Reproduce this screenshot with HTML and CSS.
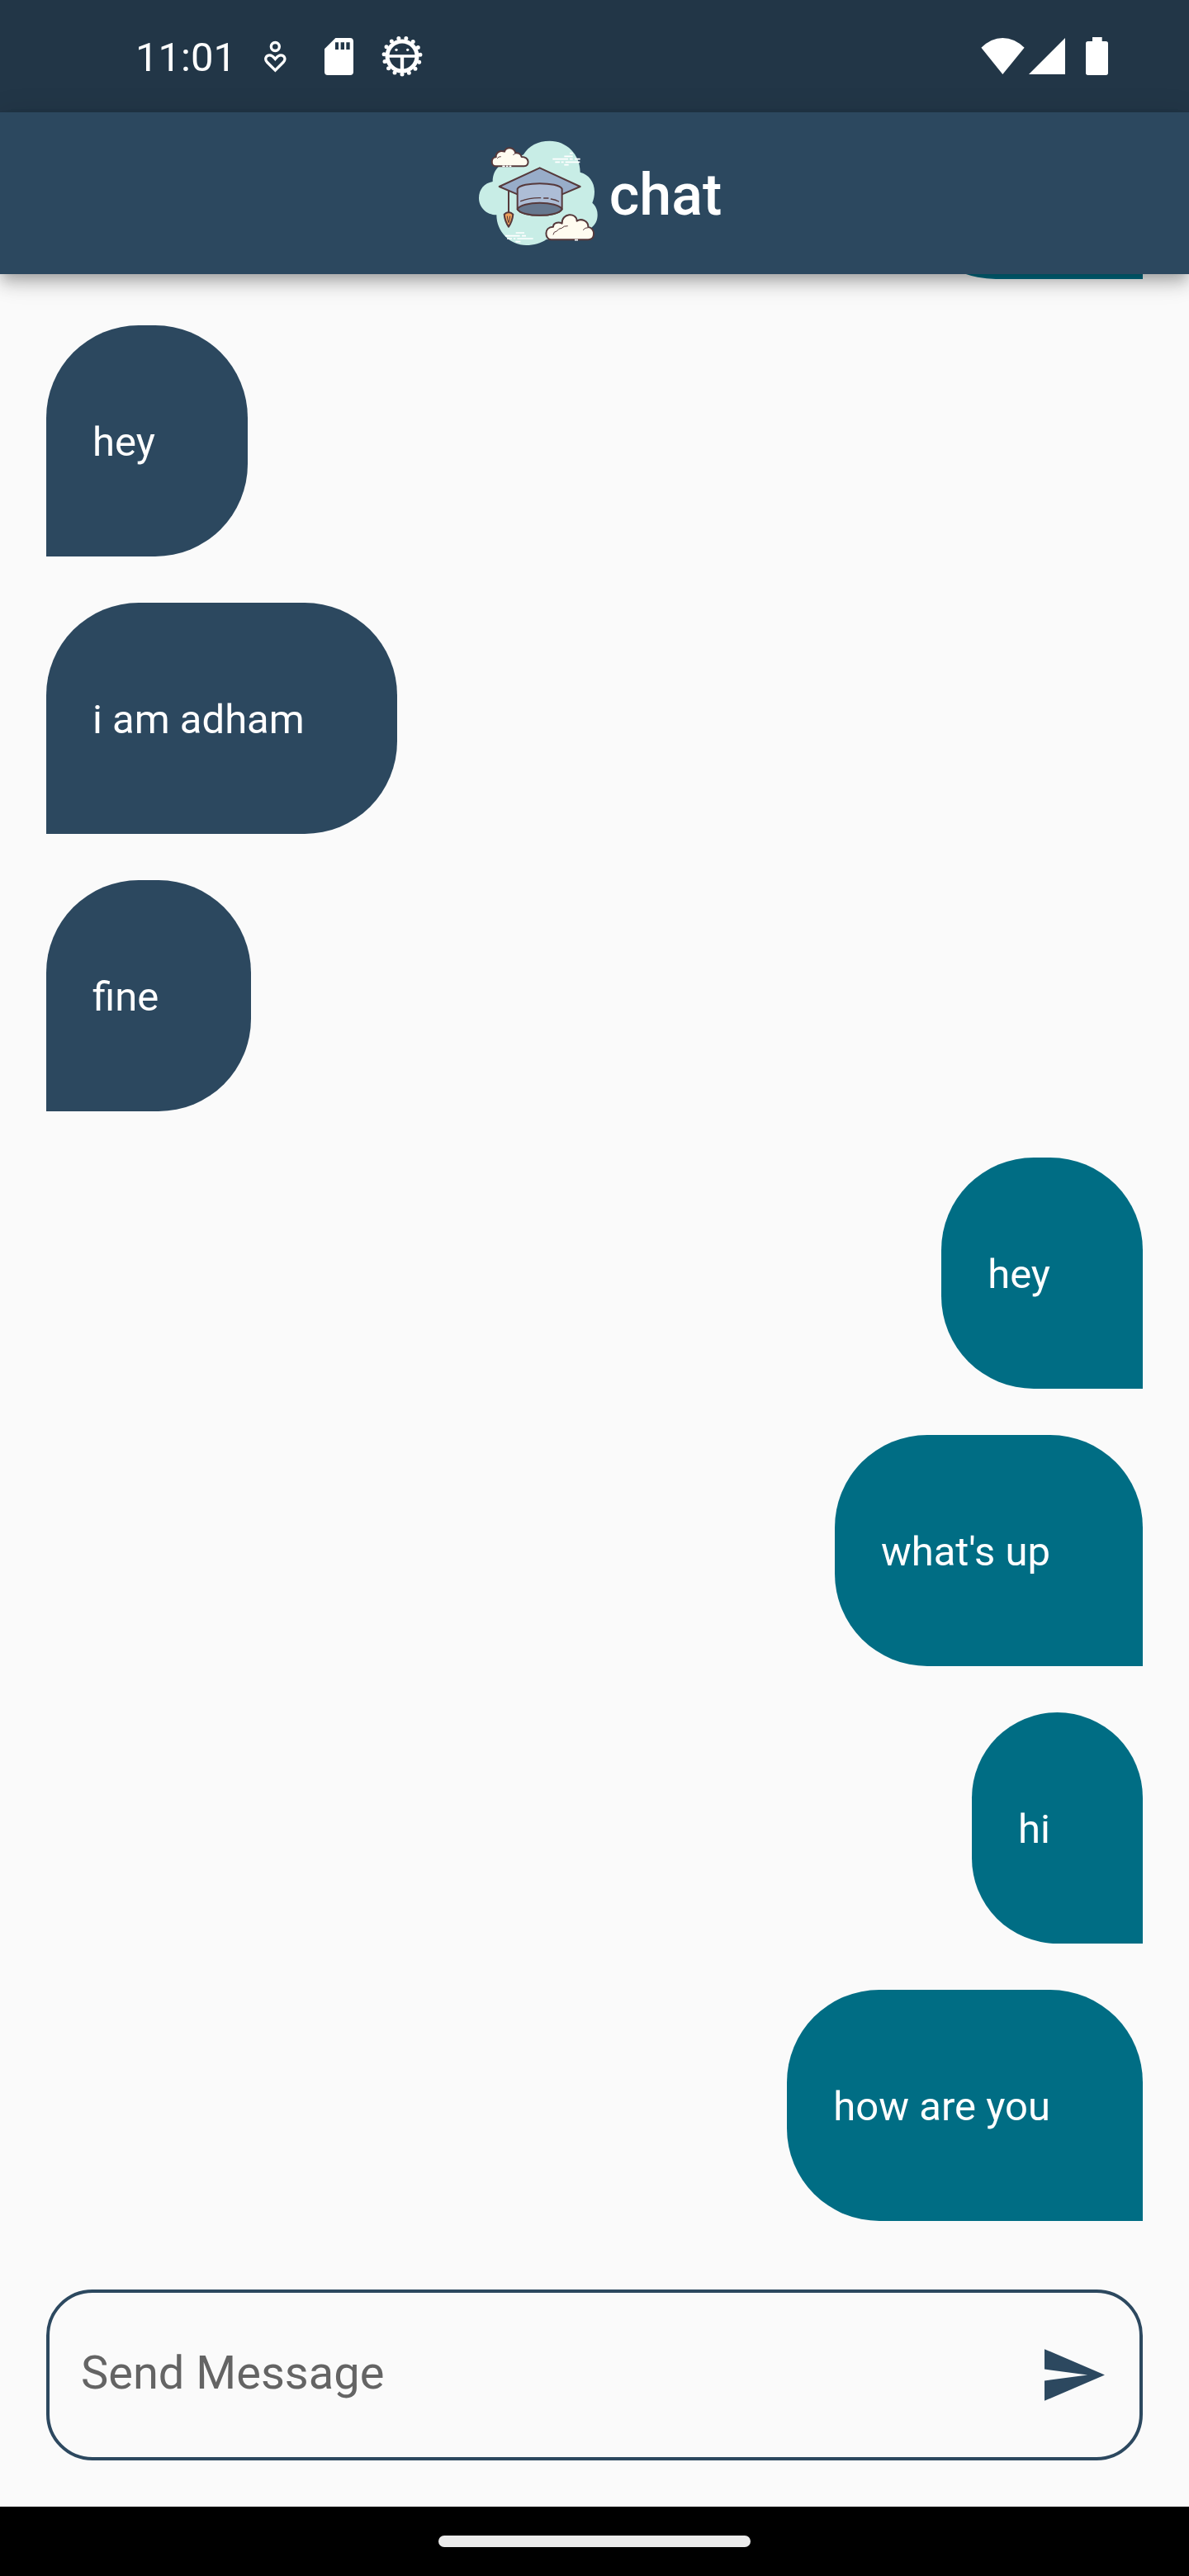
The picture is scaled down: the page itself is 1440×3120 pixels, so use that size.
FILE: index.html
```html
<!DOCTYPE html>
<html lang="en">
<head>
<meta charset="utf-8">
<meta name="viewport" content="width=device-width, initial-scale=1">
<title>chat</title>
<link rel="stylesheet" href="styles.css">
</head>
<body>
<div class="status-bar">
  <div class="status-left">
    <span class="clock">11:01</span>
    <svg class="icon-health" viewBox="540 86 81 116" aria-hidden="true">
      <g fill="none" stroke="#fff" stroke-width="10">
        <circle cx="580" cy="108" r="15"/>
        <path d="M580 194 L551 165 C540 154 546 139 560 139 C570 139 575 147 580 153 C585 147 590 139 600 139 C614 139 620 154 609 165 Z"/>
      </g>
    </svg>
    <svg class="icon-card" viewBox="759 77 105 135" aria-hidden="true">
      <path fill="#fff" fill-rule="evenodd" d="M799 77 H852 Q864 77 864 90 V200 Q864 212 852 212 H771 Q759 212 759 200 V117 Z M798 93 V119 H810 V93 Z M818 93 V119 H831 V93 Z M838 93 V119 H851 V93 Z"/>
    </svg>
    <svg class="icon-gear" viewBox="967 70 150 150" aria-hidden="true">
      <g fill="none" stroke="#fff">
        <circle cx="1042" cy="145" r="54" stroke-width="15"/>
        <circle cx="1042" cy="145" r="66" stroke-width="15" stroke-linecap="round" pathLength="15" stroke-dasharray="0 1" transform="rotate(90 1042 145)"/>
        <path d="M992 145 H1092" stroke-width="11"/>
        <path d="M1042 145 V196" stroke-width="13"/>
      </g>
      <circle cx="1021" cy="122" r="5" fill="#fff"/>
      <circle cx="1062" cy="122" r="5" fill="#fff"/>
    </svg>
  </div>
  <div class="status-right">
    <svg class="icon-wifi" viewBox="84 75 159 134" aria-hidden="true">
      <path fill="#fff" d="M84 111 Q120 75 163 75 Q207 75 243 111 L163 209 Z"/>
    </svg>
    <svg class="icon-signal" viewBox="257 76 133 133" aria-hidden="true">
      <path fill="#fff" d="M257 209 L390 76 V209 Z"/>
    </svg>
    <svg class="icon-battery" viewBox="465 75 81 138" aria-hidden="true">
      <path fill="#fff" d="M489 75 H524 V90 H538 Q546 90 546 98 V205 Q546 213 538 213 H473 Q465 213 465 205 V98 Q465 90 473 90 H489 Z"/>
    </svg>
  </div>
</div>

<header class="app-bar">
  <svg class="logo" viewBox="18 60 516 384" aria-hidden="true">
    <path fill="#c8ede6" d="M222 112 C240 80 275 62 317 62 C378 62 428 110 428 176 C460 184 480 212 480 246 C480 262 477 275 472 287 C485 298 491 313 491 331 C491 352 482 368 468 378 L420 420 H305 C285 434 260 441 232 441 C172 441 124 392 124 331 C88 331 60 304 60 270 C60 238 80 215 110 210 C110 186 118 168 134 154 Z"/>
    <g stroke="#fff" stroke-width="5" fill="none">
      <path d="M390 107 H401 M370 118 H401 M328 128 H384 M390 128 H401 M408 128 H428 M337 139 H354 M359 139 H368 M374 139 H427 M370 149 H386"/>
      <path d="M194 396 H225 M156 407 H209 M216 407 H231 M162 417 H180 M186 417 H193 M199 417 H257 M193 428 H211"/>
    </g>
    <g stroke="#56393b" stroke-width="6" stroke-linejoin="round" stroke-linecap="round">
      <path fill="#fffcf0" d="M121 154 C103 154 102 122 122 121 C121 104 137 95 153 101 C158 83 187 82 193 106 C204 104 213 111 215 120 C245 120 245 154 224 154 Z"/>
      <path fill="none" stroke-width="3" d="M127 125 Q131 118 139 119 M193 107 Q188 108 185 113"/>
      <path fill="#98adc9" d="M281 160 L428 228 L362 256 L200 256 L134 228 Z"/>
      <path fill="#adbdd6" d="M200 236 C214 210 348 210 362 236 V310 C346 340 216 340 200 310 Z"/>
      <path fill="#67788f" d="M200 310 C214 280 348 280 362 310 C346 340 216 340 200 310 Z"/>
      <path fill="none" stroke-width="4" d="M212 281 Q245 268 284 269 M296 270 H312 M322 273 Q340 276 350 282"/>
      <path fill="none" d="M168 243 V322"/>
      <path fill="#eda25c" d="M168 321 Q158 322 152 329 Q154 353 168 374 Q182 353 184 329 Q178 322 168 321 Z"/>
      <path fill="none" stroke-width="3" d="M163 336 Q164 349 168 359 Q172 349 173 336"/>
      <path fill="#fffcf0" d="M322 421 C300 421 294 375 330 374 C330 360 348 355 362 362 C360 324 415 320 416 353 C432 342 458 353 457 374 C485 381 483 421 457 421 Z"/>
      <path fill="none" stroke-width="3" d="M330 402 Q331 391 343 390 Q350 379 361 379 Q368 370 382 371 M439 385 Q445 376 457 377"/>
    </g>
    <path stroke="#fff" stroke-width="5" d="M145 154 H155 M159 154 H166 M170 154 H178 M408 422 H420"/>
  </svg>
  <h1 class="title">chat</h1>
</header>

<main class="messages">
  <p class="bubble sent earlier" aria-hidden="true"></p>
  <p class="bubble received">hey</p>
  <p class="bubble received">i am adham</p>
  <p class="bubble received">fine</p>
  <p class="bubble sent">hey</p>
  <p class="bubble sent">what's up</p>
  <p class="bubble sent">hi</p>
  <p class="bubble sent">how are you</p>
</main>

<form class="composer">
  <input class="composer-input" type="text" placeholder="Send Message" aria-label="Send Message">
  <button class="send" type="button" aria-label="Send">
    <svg viewBox="0 0 21 18" aria-hidden="true"><path fill="#2c485f" d="M0 18 L21 9 L0 0 V7 L15 9 L0 11 Z"/></svg>
  </button>
</form>

<div class="nav-bar"><div class="nav-handle"></div></div>
</body>
</html>
```
FILE: styles.css
```css
* {
  box-sizing: border-box;
}

body {
  margin: 0;
  height: 100vh;
  display: flex;
  flex-direction: column;
  background: #fafafa;
  color: #fff;
  font-family: Roboto, "Liberation Sans", sans-serif;
}

svg {
  display: block;
  flex: none;
}

.status-bar {
  flex: none;
  height: 136px;
  padding: 0 98px 0 164px;
  display: flex;
  align-items: center;
  justify-content: space-between;
  background: #223647;
}

.status-left,
.status-right {
  display: flex;
  align-items: center;
}

.clock {
  margin-right: 34px;
  padding-top: 4px;
  font-size: 49px;
  line-height: 56px;
}

.icon-health {
  width: 27px;
  height: 39px;
  margin-right: 46px;
}

.icon-card {
  width: 35px;
  height: 45px;
  margin-right: 34px;
}

.icon-gear {
  width: 50px;
  height: 50px;
}

.icon-wifi {
  width: 53px;
  height: 44px;
  margin-right: 5px;
}

.icon-signal {
  width: 44px;
  height: 44px;
  margin-right: 25px;
}

.icon-battery {
  width: 27px;
  height: 46px;
}

.app-bar {
  flex: none;
  height: 196px;
  display: flex;
  align-items: center;
  justify-content: center;
  background: #2c485f;
  z-index: 1;
  box-shadow: 0 7px 14px -4px rgba(0, 0, 0, 0.2),
    0 14px 18px rgba(0, 0, 0, 0.14),
    0 4px 35px rgba(0, 0, 0, 0.12);
}

.logo {
  width: 172px;
  height: 128px;
}

.title {
  margin: 0;
  padding-top: 4px;
  font-size: 70px;
  line-height: 84px;
  font-weight: 500;
}

.messages {
  flex: 1;
  min-height: 0;
  overflow: hidden;
  padding: 0 56px 28px;
  display: flex;
  flex-direction: column;
  justify-content: flex-end;
  gap: 56px;
}

.bubble {
  flex: none;
  margin: 0;
  padding: 114px 112px 110px 56px;
  font-size: 49px;
  line-height: 56px;
}

.received {
  align-self: flex-start;
  background: #2c485f;
  border-radius: 112px 112px 112px 0;
}

.sent {
  align-self: flex-end;
  background: #006d84;
  border-radius: 112px 112px 0 112px;
}

.earlier {
  width: 290px;
  height: 280px;
}

.composer {
  flex: none;
  height: 207px;
  margin: 55px 56px 56px;
  padding: 0 42px 0 38px;
  display: flex;
  align-items: center;
  border: 4px solid #2c485f;
  border-radius: 56px;
}

.composer-input {
  flex: 1;
  min-width: 0;
  height: 84px;
  padding: 0 0 6px;
  border: 0;
  outline: 0;
  background: none;
  color: #222;
  font: inherit;
  font-size: 56px;
}

.composer-input::placeholder {
  color: #646464;
  opacity: 1;
}

.send {
  flex: none;
  padding: 0;
  border: 0;
  background: none;
}

.send svg {
  width: 73px;
  height: 63px;
}

.nav-bar {
  flex: none;
  height: 84px;
  display: flex;
  align-items: center;
  justify-content: center;
  background: #000;
}

.nav-handle {
  width: 378px;
  height: 14px;
  border-radius: 7px;
  background: #ebebeb;
}
```
